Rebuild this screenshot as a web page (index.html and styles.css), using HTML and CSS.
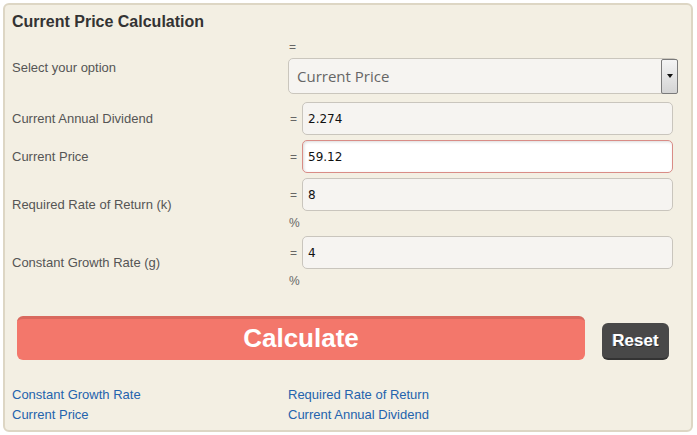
FILE: index.html
```html
<!DOCTYPE html>
<html>
<head>
<meta charset="utf-8">
<link rel="stylesheet" href="styles.css">
</head>
<body>
<div class="panel">
  <h1 class="title">Current Price Calculation</h1>
  <div class="row row-select">
    <div class="label">Select your option</div>
    <div class="field">
      <div class="eq-line">=</div>
      <div class="select">
        <span class="select-text">Current Price</span>
        <span class="select-btn"><span class="tri"></span></span>
      </div>
    </div>
  </div>
  <div class="row row-first">
    <div class="label">Current Annual Dividend</div>
    <div class="field">
      <div class="inline"><span class="eq">=</span><div class="input">2.274</div></div>
    </div>
  </div>
  <div class="row">
    <div class="label">Current Price</div>
    <div class="field">
      <div class="inline"><span class="eq">=</span><div class="input active">59.12</div></div>
    </div>
  </div>
  <div class="row">
    <div class="label">Required Rate of Return (k)</div>
    <div class="field">
      <div class="inline"><span class="eq">=</span><div class="input">8</div></div>
      <div class="pct">%</div>
    </div>
  </div>
  <div class="row row-last">
    <div class="label">Constant Growth Rate (g)</div>
    <div class="field">
      <div class="inline"><span class="eq">=</span><div class="input">4</div></div>
      <div class="pct">%</div>
    </div>
  </div>
  <div class="buttons">
    <div class="calc">Calculate</div>
    <div class="reset">Reset</div>
  </div>
  <div class="links">
    <a class="link">Constant Growth Rate</a>
    <a class="link">Required Rate of Return</a>
    <a class="link">Current Price</a>
    <a class="link">Current Annual Dividend</a>
  </div>
</div>
</body>
</html>
```
FILE: styles.css
```css
html, body {
  margin: 0;
  padding: 0;
  background: #ffffff;
}
body {
  padding: 3px;
  font-family: "Liberation Sans", Arial, sans-serif;
}
.panel {
  box-sizing: border-box;
  width: 690px;
  height: 429px;
  background: #f3efe3;
  border: 2px solid #ddd6c4;
  border-radius: 6px;
  padding: 0 7px;
}
.title {
  margin: 0;
  padding-top: 8px;
  height: 26px;
  font-size: 16px;
  font-weight: bold;
  color: #333333;
  line-height: 18px;
}
.row {
  display: grid;
  grid-template-columns: 276px 1fr;
  align-items: center;
  margin-top: 5px;
}
.row-select {
  margin-top: 1px;
}
.row-first {
  margin-top: 8px;
}
.row-last {
  margin-top: 6px;
}
.label {
  font-size: 13px;
  color: #555555;
}
.field {
  display: flex;
  flex-direction: column;
}
.eq-line {
  font-size: 12px;
  color: #666;
  padding-left: 1px;
  height: 14px;
  line-height: 14px;
  margin-bottom: 4px;
}
.select {
  width: 390px;
  height: 36px;
  box-sizing: border-box;
  border: 1px solid #cac6bd;
  border-radius: 5px;
  background: #f6f4f1;
  display: flex;
  align-items: center;
}
.select-text {
  font-family: "Open Sans", sans-serif;
  font-size: 15px;
  color: #666666;
  padding-left: 8px;
  flex: 1;
}
.select-btn {
  width: 17px;
  height: 35px;
  box-sizing: border-box;
  border: 1px solid #7a7a7a;
  border-radius: 2px;
  background: linear-gradient(#f4f4f4, #d4d4d4);
  display: flex;
  align-items: center;
  justify-content: center;
  margin-right: -1px;
}
.tri {
  width: 0;
  height: 0;
  border-left: 3px solid transparent;
  border-right: 3px solid transparent;
  border-top: 4px solid #111;
}
.inline {
  display: flex;
  align-items: center;
}
.eq {
  width: 14px;
  font-size: 12px;
  color: #666;
  padding-left: 2px;
  box-sizing: border-box;
}
.input {
  width: 371px;
  height: 33px;
  box-sizing: border-box;
  border: 1px solid #c9c5bd;
  border-radius: 5px;
  background: #f6f4f1;
  font-family: "DejaVu Sans", Verdana, sans-serif;
  font-size: 12px;
  color: #111;
  padding-left: 5px;
  display: flex;
  align-items: center;
}
.input.active {
  background: #ffffff;
  border-color: #d98c86;
  box-shadow: inset 1px 1px 3px rgba(0,0,0,0.15);
}
.pct {
  font-size: 12px;
  color: #666;
  padding-left: 1px;
  height: 14px;
  line-height: 14px;
  margin-top: 5px;
}
.buttons {
  display: flex;
  align-items: flex-end;
  margin-top: 28px;
  padding-left: 5px;
}
.calc {
  width: 568px;
  height: 44px;
  box-sizing: border-box;
  background: #f3776b;
  border-top: 3px solid #d9695e;
  border-radius: 6px;
  color: #ffffff;
  font-weight: bold;
  font-size: 26px;
  display: flex;
  align-items: center;
  justify-content: center;
  padding-bottom: 2px;
}
.reset {
  margin-left: 17px;
  width: 67px;
  height: 37px;
  box-sizing: border-box;
  background: #484848;
  border-bottom: 2px solid #333;
  border-radius: 6px;
  color: #ffffff;
  font-weight: bold;
  font-size: 17px;
  display: flex;
  align-items: center;
  justify-content: center;
  text-shadow: 1px 1px 0 rgba(0,0,0,0.4), -1px 0 0 rgba(180,220,255,0.3);
}
.links {
  display: grid;
  grid-template-columns: 276px 1fr;
  row-gap: 5px;
  margin-top: 27px;
}
.link {
  font-size: 13px;
  color: #2463ad;
  line-height: 15px;
}
```
